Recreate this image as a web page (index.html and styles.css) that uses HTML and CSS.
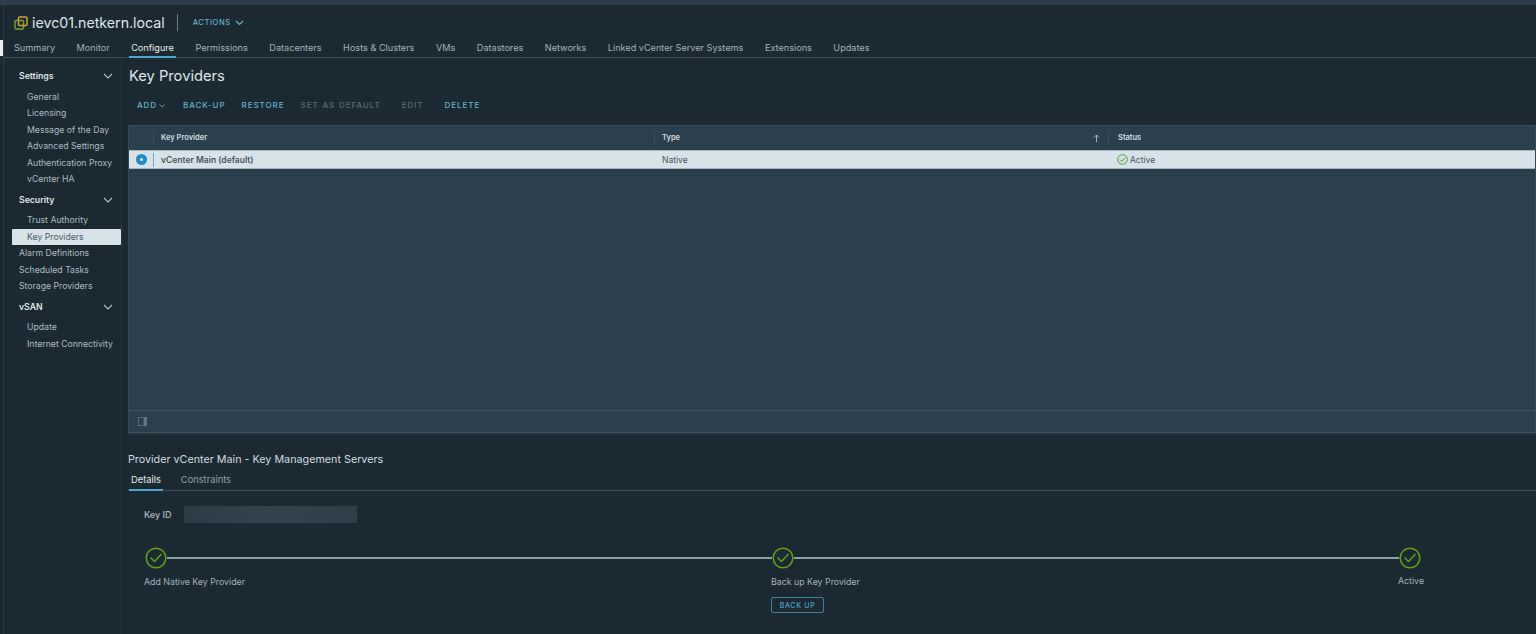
FILE: index.html
```html
<!DOCTYPE html>
<html lang="en">
<head>
    <meta charset="UTF-8">
    <meta name="viewport" content="width=device-width, initial-scale=1.0">
    <title>Key Providers</title>
    <link rel="stylesheet" href="styles.css">
</head>
<body>
    <div class="top-strip"></div>
    <div class="page">
        <div class="rail"><div class="rail-mark"></div></div>
        <div class="content">
            <header class="object-head">
                <svg class="vc-icon" width="14" height="14" viewBox="0 0 14 14" fill="none">
                    <rect x="1" y="4.500" width="8.500" height="8.500" rx="1" stroke="#7f9a2c" stroke-width="1.500"/>
                    <rect x="4.500" y="1" width="8.500" height="8.500" rx="1" stroke="#c9a52a" stroke-width="1.500"/>
                </svg>
                <span class="object-name">ievc01.netkern.local</span>
                <span class="head-sep"></span>
                <span class="actions">ACTIONS
                    <svg width="9" height="6" viewBox="0 0 9 6" fill="none"><path d="M1 1l3.500 3.500L8 1" stroke="#62b5d0" stroke-width="1.200"/></svg>
                </span>
            </header>

            <nav class="tabs">
                <a>Summary</a>
                <a>Monitor</a>
                <a class="active">Configure</a>
                <a>Permissions</a>
                <a>Datacenters</a>
                <a>Hosts &amp; Clusters</a>
                <a>VMs</a>
                <a>Datastores</a>
                <a>Networks</a>
                <a>Linked vCenter Server Systems</a>
                <a>Extensions</a>
                <a>Updates</a>
            </nav>

            <div class="body-row">
                <aside class="sidebar">
                    <div class="side-group">Settings <svg width="10" height="6" viewBox="0 0 10 6" fill="none"><path d="M1 1l4 4 4-4" stroke="#b5c2ca" stroke-width="1.100"/></svg></div>
                    <a class="side-sub">General</a>
                    <a class="side-sub">Licensing</a>
                    <a class="side-sub">Message of the Day</a>
                    <a class="side-sub">Advanced Settings</a>
                    <a class="side-sub">Authentication Proxy</a>
                    <a class="side-sub">vCenter HA</a>
                    <div class="side-group">Security <svg width="10" height="6" viewBox="0 0 10 6" fill="none"><path d="M1 1l4 4 4-4" stroke="#b5c2ca" stroke-width="1.100"/></svg></div>
                    <a class="side-sub">Trust Authority</a>
                    <a class="side-sub selected">Key Providers</a>
                    <a class="side-link">Alarm Definitions</a>
                    <a class="side-link">Scheduled Tasks</a>
                    <a class="side-link">Storage Providers</a>
                    <div class="side-group">vSAN <svg width="10" height="6" viewBox="0 0 10 6" fill="none"><path d="M1 1l4 4 4-4" stroke="#b5c2ca" stroke-width="1.100"/></svg></div>
                    <a class="side-sub">Update</a>
                    <a class="side-sub">Internet Connectivity</a>
                </aside>

                <main class="main">
                    <h1>Key Providers</h1>
                    <div class="toolbar">
                        <button>ADD <svg class="add-caret" width="6" height="4" viewBox="0 0 6 4" fill="none"><path d="M.5.5L3 3 5.500.5" stroke="#62b5d0" stroke-width=".8"/></svg></button>
                        <button>BACK-UP</button>
                        <button>RESTORE</button>
                        <button disabled>SET AS DEFAULT</button>
                        <button disabled>EDIT</button>
                        <button>DELETE</button>
                    </div>

                    <section class="grid">
                        <div class="grid-head">
                            <div class="col-radio"></div>
                            <div class="col-name">Key Provider</div>
                            <div class="col-type">Type <svg width="7" height="8" viewBox="0 0 7 8" fill="none"><path d="M3.500 8V1M1 3.500L3.500 1 6 3.500" stroke="#b5c2ca" stroke-width=".9"/></svg></div>
                            <div class="col-status">Status</div>
                        </div>
                        <div class="grid-row">
                            <div class="col-radio"><span class="radio"></span></div>
                            <div class="col-name">vCenter Main (default)</div>
                            <div class="col-type">Native</div>
                            <div class="col-status">
                                <svg width="11" height="11" viewBox="0 0 11 11" fill="none"><circle cx="5.500" cy="5.500" r="4.800" stroke="#4f9a3c" stroke-width="1"/><path d="M3 5.600l1.800 1.800L8 3.800" stroke="#4f9a3c" stroke-width="1"/></svg>
                                Active
                            </div>
                        </div>
                        <div class="grid-empty"></div>
                        <div class="grid-foot">
                            <svg width="9" height="9" viewBox="0 0 9 9"><rect x="0.500" y="0.500" width="5.500" height="8" fill="none" stroke="#54686f" stroke-width="1"/><rect x="6" y="0" width="3" height="9" fill="#66787f"/></svg>
                        </div>
                    </section>

                    <h2>Provider vCenter Main - Key Management Servers</h2>
                    <nav class="sub-tabs">
                        <a class="active">Details</a>
                        <a>Constraints</a>
                    </nav>

                    <div class="key-id">
                        <span>Key ID</span>
                        <div class="key-blur"></div>
                    </div>

                    <div class="stepper">
                        <div class="step">
                            <div class="step-track"><svg class="check" width="22" height="22" viewBox="0 0 22 22" fill="none"><circle cx="11" cy="11" r="9.800" stroke="#5fa319" stroke-width="1.500"/><path d="M5.500 10.500l4 4 7-7.500" stroke="#5fa319" stroke-width="1.500"/></svg><span class="step-line"></span></div>
                            <div class="step-label">Add Native Key Provider</div>
                        </div>
                        <div class="step">
                            <div class="step-track"><svg class="check" width="22" height="22" viewBox="0 0 22 22" fill="none"><circle cx="11" cy="11" r="9.800" stroke="#5fa319" stroke-width="1.500"/><path d="M5.500 10.500l4 4 7-7.500" stroke="#5fa319" stroke-width="1.500"/></svg><span class="step-line"></span></div>
                            <div class="step-label">Back up Key Provider</div>
                            <button class="back-up">BACK UP</button>
                        </div>
                        <div class="step last">
                            <div class="step-track"><svg class="check" width="22" height="22" viewBox="0 0 22 22" fill="none"><circle cx="11" cy="11" r="9.800" stroke="#5fa319" stroke-width="1.500"/><path d="M5.500 10.500l4 4 7-7.500" stroke="#5fa319" stroke-width="1.500"/></svg></div>
                            <div class="step-label">Active</div>
                        </div>
                    </div>
                </main>
            </div>
        </div>
    </div>
</body>
</html>
```

FILE: styles.css
```css
* {
    box-sizing: border-box;
}
html, body {
    height: 100%;
}
body {
    margin: 0;
    overflow: hidden;
    background-color: #1b2a32;
    color: #adbbc4;
    font-family: Inter, "Noto Sans", sans-serif;
    font-size: 8.7px;
}
.top-strip {
    height: 5px;
    background-color: #2a3d4c;
}
.page {
    display: flex;
    height: 629px;
}
.rail {
    flex: 0 0 4px;
    border-right: 1px solid #2a3a45;
    padding-top: 35px;
}
.rail-mark {
    width: 3px;
    height: 16px;
    background-color: #e8eef2;
}
.content {
    flex: 1;
    min-width: 0;
}
.object-head {
    display: flex;
    align-items: center;
    height: 35px;
    padding-left: 10px;
}
.vc-icon {
    margin-right: 4px;
}
.object-name {
    font-size: 14.2px;
    color: #dfe6ea;
}
.head-sep {
    width: 1px;
    height: 17px;
    margin: 0 15px 0 12px;
    background-color: #6a7c88;
}
.actions {
    display: flex;
    align-items: center;
    gap: 4px;
    font-size: 7.5px;
    font-weight: 500;
    letter-spacing: 0.6px;
    color: #62b5d0;
}
.tabs {
    display: flex;
    gap: 21.5px;
    height: 18px;
    padding-left: 10px;
    border-bottom: 1px solid #3c4f5b;
    font-size: 9.15px;
    color: #a3b2bc;
}
.tabs a {
    height: 18px;
    line-height: 15px;
    white-space: nowrap;
}
.tabs a.active {
    margin: 0 -2px;
    padding: 0 2px;
    color: #e6edf1;
    border-bottom: 2px solid #4aa8d2;
}
.body-row {
    display: flex;
}
.sidebar {
    flex: 0 0 118px;
    height: 576px;
    padding: 6px 0 0 8px;
    border-right: 1px solid #263640;
}
.side-group {
    display: flex;
    align-items: center;
    justify-content: space-between;
    height: 16.5px;
    margin: 4px 0;
    padding: 0 8px 0 7px;
    font-weight: 600;
    color: #dfe6ea;
}
.sidebar a {
    display: block;
    height: 16.5px;
    line-height: 16.5px;
    white-space: nowrap;
}
.side-sub {
    padding-left: 15px;
}
.side-link {
    padding-left: 7px;
}
.sidebar a.selected {
    background-color: #d8e3e9;
    color: #485a66;
    border-radius: 1px;
}
.main {
    flex: 1;
    min-width: 0;
    padding-left: 6px;
}
h1 {
    margin: 9px 0 0 1px;
    font-size: 14.7px;
    line-height: 18px;
    font-weight: 400;
    color: #dfe6ea;
}
.toolbar {
    display: flex;
    gap: 16px;
    height: 32px;
    margin-top: 4px;
    padding-left: 9px;
    align-items: center;
}
.toolbar button {
    padding: 0;
    border: 0;
    background: none;
    font-family: inherit;
    font-size: 8px;
    font-weight: 500;
    letter-spacing: 0.95px;
    word-spacing: 0.8px;
    color: #62b5d0;
}
.toolbar button:first-child {
    margin-right: 2px;
}
.add-caret {
    margin-left: -2px;
}
.toolbar button:disabled {
    margin-right: 5px;
    color: #566a76;
}
.grid {
    height: 308px;
    margin-top: 4px;
    margin-bottom: 19px;
    background-color: #2a404e;
    border: 1px solid #33495a;
    border-bottom-color: #3e5362;
    box-shadow: 0 2px 0 #24333e;
}
.grid-head, .grid-row {
    display: flex;
    align-items: center;
}
.grid-head {
    height: 24px;
    font-size: 7.5px;
    font-weight: 600;
    color: #d5dee4;
}
.grid-row {
    height: 19px;
    background-color: #d8e3e9;
    color: #44545f;
    border-top: 1px solid #a9b7c0;
    border-bottom: 1px solid #a9b7c0;
    font-size: 8.5px;
}
.col-radio {
    display: flex;
    align-items: center;
    justify-content: center;
    flex: 0 0 25px;
    height: 14px;
    border-right: 1px solid #3a4f5e;
}
.grid-row .col-radio {
    border-right-color: #8b9aa5;
}
.radio {
    position: relative;
    width: 11px;
    height: 11px;
    border-radius: 50%;
    background-color: #1c8dc4;
}
.radio::after {
    content: "";
    position: absolute;
    inset: 0;
    margin: auto;
    width: 3px;
    height: 3px;
    border-radius: 50%;
    background-color: #e8f2f7;
}
.col-name {
    flex: 0 0 501px;
    height: 14px;
    line-height: 14px;
    padding-left: 7px;
    border-right: 1px solid #3a4f5e;
    white-space: nowrap;
}
.grid-row .col-name {
    border-right-color: transparent;
    font-weight: 600;
}
.col-type {
    display: flex;
    align-items: center;
    justify-content: space-between;
    flex: 0 0 454px;
    height: 14px;
    padding: 0 8px 0 7px;
    border-right: 1px solid #3a4f5e;
}
.grid-row .col-type {
    border-right-color: transparent;
}
.col-status {
    display: flex;
    align-items: center;
    gap: 2px;
    padding-left: 8px;
}
.grid-head .col-status {
    padding-left: 9px;
}
.grid-head .col-type, .grid-head .col-status {
    padding-bottom: 1px;
}
.grid-empty {
    height: 241px;
}
.grid-foot {
    display: flex;
    align-items: center;
    height: 22px;
    padding-left: 9px;
    border-top: 1px solid #3e5362;
}
h2 {
    margin: 0;
    font-size: 10.75px;
    line-height: 16px;
    font-weight: 400;
    color: #d0dae0;
}
.sub-tabs {
    display: flex;
    gap: 18px;
    height: 19px;
    margin-top: 4px;
    padding-left: 2px;
    border-bottom: 1px solid #3c4f5b;
    font-size: 9.3px;
    color: #8fa0ab;
}
.sub-tabs a {
    height: 19px;
    line-height: 15px;
}
.sub-tabs a.active {
    margin-left: -1px;
    padding: 0 2px;
    color: #e6edf1;
    border-bottom: 2px solid #4aa8d2;
}
.key-id {
    display: flex;
    align-items: center;
    height: 17px;
    margin-top: 15px;
    padding-left: 16px;
    font-weight: 500;
    font-size: 9px;
}
.key-id span {
    flex: 0 0 40px;
}
.key-blur {
    width: 173px;
    height: 17px;
    background: linear-gradient(90deg, #2c3b45, #33424d 50%, #2e3d47);
}
.stepper {
    display: flex;
    margin-top: 24px;
    padding-left: 16px;
}
.step {
    flex: 0 0 627px;
}
.step.last {
    flex: 0 0 26px;
    text-align: center;
}
.step-track {
    display: flex;
    align-items: center;
    height: 22px;
    padding-left: 1px;
}
.check {
    flex: none;
}
.step-line {
    flex: 1;
    height: 2px;
    margin-right: -1px;
    background-color: #8f9da6;
}
.step-label {
    margin-top: 7px;
    font-size: 8.8px;
    line-height: 12px;
    white-space: nowrap;
    color: #a3b2bc;
}
.step.last .step-label {
    margin-top: 6px;
}
.back-up {
    display: block;
    width: 53px;
    height: 16px;
    margin-top: 9px;
    padding: 0;
    background: none;
    border: 1px solid #3f7f9e;
    border-radius: 2px;
    font-family: inherit;
    font-size: 7px;
    font-weight: 500;
    letter-spacing: 0.7px;
    color: #4aa8d2;
}
```
